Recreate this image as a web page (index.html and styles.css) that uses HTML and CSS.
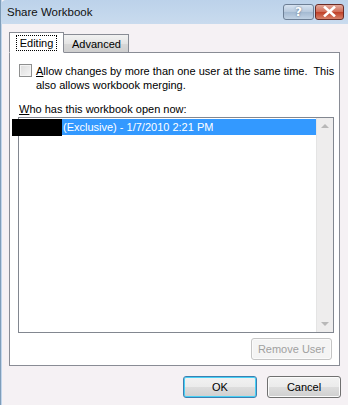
FILE: index.html
```html
<!DOCTYPE html>
<html lang="en">

<head>
    <meta charset="UTF-8">
    <title>Share Workbook</title>
    <link rel="stylesheet" href="styles.css">
</head>

<body>
    <div class="window">
        <div class="titlebar">
            <span class="title">Share Workbook</span>
            <div class="caption-buttons">
                <button class="cap-btn help">?</button>
                <button class="cap-btn close">
                    <svg width="13" height="11" viewBox="0 0 13 11">
                        <path d="M2 1.5 L11 9.5 M11 1.5 L2 9.5" stroke="#fff" stroke-width="2.6" stroke-linecap="square" />
                    </svg>
                </button>
            </div>
        </div>

        <div class="client">
            <div class="tabs">
                <div class="tab active"><span class="focus">Editing</span></div>
                <div class="tab">Advanced</div>
            </div>

            <div class="panel">
                <label class="check-row">
                    <span class="checkbox"></span>
                    <span class="check-text">Allow changes by more than one user at the same time.&nbsp; This<br>also allows workbook merging.</span>
                </label>

                <div class="list-label">Who has this workbook open now:</div>

                <div class="listbox">
                    <div class="rows">
                        <div class="row selected">(Exclusive) - 1/7/2010 2:21 PM</div>
                    </div>
                    <div class="scrollbar">
                        <span class="arrow up"></span>
                        <span class="arrow down"></span>
                    </div>
                    <div class="redacted"></div>
                </div>

                <div class="panel-actions">
                    <button class="btn disabled">Remove User</button>
                </div>
            </div>

            <div class="footer">
                <button class="btn default">OK</button>
                <button class="btn">Cancel</button>
            </div>
        </div>
    </div>
</body>

</html>
```

FILE: styles.css
```css
* {
    margin: 0;
    padding: 0;
    box-sizing: border-box;
}

body {
    width: 348px;
    height: 405px;
    overflow: hidden;
    font-family: "Liberation Sans", Arial, sans-serif;
    font-size: 11px;
    color: #000;
    background: #f5f1f4;
}

.window {
    height: 405px;
    border-left: 1px solid #7f9db9;
    box-shadow: inset 1px 0 0 #c2d6ec;
    display: flex;
    flex-direction: column;
}

.titlebar {
    height: 24px;
    background: linear-gradient(#bcd2ea, #c9dbee);
    display: flex;
    align-items: center;
    justify-content: space-between;
    padding: 0 4px 0 6px;
    border-top-left-radius: 5px;
}

.title {
    font-size: 11.5px;
    color: #111;
}

.caption-buttons {
    display: flex;
    gap: 1px;
    margin-top: -1px;
}

.cap-btn {
    height: 16px;
    border: 1px solid #6d7f95;
    border-radius: 3px;
    font-family: "DejaVu Sans", sans-serif;
    font-weight: bold;
    font-size: 12px;
    display: flex;
    align-items: center;
    justify-content: center;
}

.cap-btn.help {
    width: 31px;
    color: #fff;
    background: linear-gradient(#d7e3f1, #b6c8dc 50%, #a3b9d1 51%, #c1d2e4);
    text-shadow: 0 0 2px #4a5c73;
}

.cap-btn.close {
    width: 29px;
    border-color: #6b2a24;
    background: linear-gradient(#e3a99c, #d06a55 50%, #bf3f27 51%, #d7826b);
}

.client {
    flex: 1;
    padding: 8px 7px 0 8px;
}

.tabs {
    display: flex;
    align-items: flex-end;
    height: 20px;
    position: relative;
    z-index: 1;
}

.tab {
    height: 18px;
    padding: 0 7px 0 8px;
    border: 1px solid #898c95;
    border-bottom: none;
    background: linear-gradient(#f2f2f2, #e4e4e4 50%, #d8d8d8 51%, #cfcfcf);
    display: flex;
    align-items: center;
    margin-left: -1px;
}

.tab.active {
    width: 55px;
    padding: 0 2px;
    margin-left: 0;
    background: #fff;
    justify-content: center;
    border-bottom: 1px solid #fff;
    margin-bottom: -1px;
    height: 21px;
}

.focus {
    outline: 1px dotted #000;
    padding: 0 3px;
    line-height: 14px;
}

.panel {
    width: 331px;
    height: 314px;
    border: 1px solid #898c95;
    background: #fff;
    padding: 11px 5px 0 9px;
}

.check-row {
    display: flex;
    gap: 4px;
    line-height: 14px;
}

.check-text {
    white-space: nowrap;
}

.check-text::first-letter,
.list-label::first-letter {
    text-decoration: underline;
}

.checkbox {
    flex: none;
    width: 13px;
    height: 13px;
    border: 1px solid #8e8f8f;
    background: linear-gradient(135deg, #dcdcdc, #f6f6f6);
    box-shadow: inset 0 0 0 1px #f4f4f4;
}

.list-label {
    margin-top: 10px;
    line-height: 14px;
}

.listbox {
    position: relative;
    width: 316px;
    height: 216px;
    margin: 1px 0 0 -1px;
    border: 1px solid #828790;
    display: flex;
}

.rows {
    flex: 1;
    padding: 1px 0 0 1px;
}

.row {
    height: 16px;
    line-height: 16px;
    padding-left: 43px;
    white-space: nowrap;
}

.row.selected {
    background: #3399ff;
    color: #fff;
}

.redacted {
    position: absolute;
    left: -7px;
    top: 1px;
    width: 50px;
    height: 17px;
    background: #000;
}

.scrollbar {
    width: 17px;
    background: #eeeded;
    border-left: 1px solid #e4e4e4;
    display: flex;
    flex-direction: column;
    justify-content: space-between;
    align-items: center;
    padding: 6px 0;
}

.arrow {
    width: 0;
    height: 0;
    border-left: 4px solid transparent;
    border-right: 4px solid transparent;
}

.arrow.up {
    border-bottom: 4px solid #b8b8b8;
}

.arrow.down {
    border-top: 4px solid #b8b8b8;
}

.panel-actions {
    display: flex;
    justify-content: flex-end;
    margin-top: 5px;
    padding-right: 2px;
}

.btn {
    width: 74px;
    height: 22px;
    border: 1px solid #707070;
    border-radius: 3px;
    background: linear-gradient(#f2f2f2, #ebebeb 50%, #dddddd 51%, #cfcfcf);
    font-family: inherit;
    font-size: 11px;
    color: #000;
    box-shadow: inset 0 0 0 1px #fbfbfb;
}

.btn.disabled {
    width: 81px;
    color: #a0a0a0;
    border-color: #c5c5c5;
    background: #f4f4f4;
}

.btn.default {
    border-color: #3c7fb1;
    box-shadow: inset 0 0 0 1px #48d0f5;
}

.footer {
    display: flex;
    justify-content: flex-end;
    gap: 10px;
    margin-top: 10px;
    padding-right: 0;
}
```
